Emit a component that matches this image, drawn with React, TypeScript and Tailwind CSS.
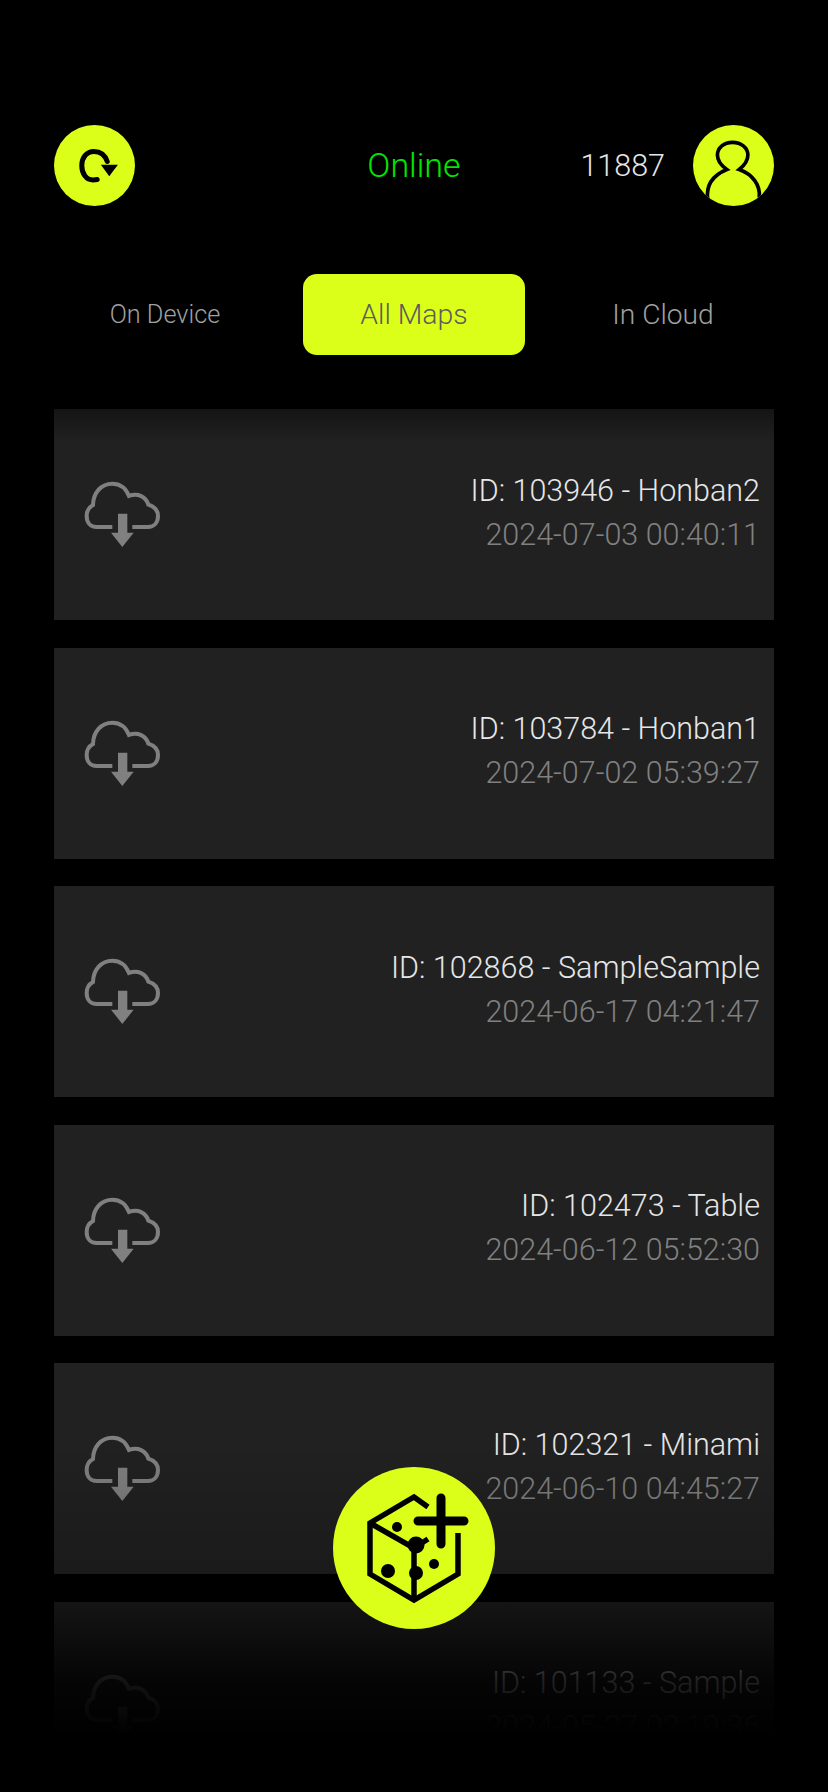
const maps = [
  { title: "ID: 103946 - Honban2", date: "2024-07-03 00:40:11" },
  { title: "ID: 103784 - Honban1", date: "2024-07-02 05:39:27" },
  { title: "ID: 102868 - SampleSample", date: "2024-06-17 04:21:47" },
  { title: "ID: 102473 - Table", date: "2024-06-12 05:52:30" },
  { title: "ID: 102321 - Minami", date: "2024-06-10 04:45:27" },
  { title: "ID: 101133 - Sample", date: "2024-05-27 02:19:36" },
];

const CloudDownload = () => (
  <svg viewBox="130 245 230 200" className="w-[76.67px] h-[66.67px] shrink-0">
    <path
      d="M215 383 H168 C148 383 138 368 138 350 C138 335 146 323 157 317 C158 280 182 253 215 253 C238 253 256 267 265 290 C292 280 316 292 323 316 C342 322 352 335 352 350 C352 370 340 383 322 383 H275"
      fill="none"
      stroke="#808080"
      strokeWidth="12"
    />
    <path d="M232 343 H260 V400 H279 L245 443 L211 400 H232 Z" fill="#808080" />
  </svg>
);

const RefreshIcon = () => (
  <svg viewBox="43 45 242 242" className="size-full">
    <path
      d="M172 208 C167 209 164 209 160 209 C139 209 126 190 126 166 C126 142 141 124 162 124 C182 124 196 136 202 154"
      fill="none"
      stroke="#000"
      strokeWidth="15"
      strokeLinecap="round"
    />
    <path d="M183 164 H234 L208 198 Z" fill="#000" />
  </svg>
);

const UserIcon = () => (
  <svg viewBox="40 45 242 242" className="size-full">
    <path
      d="M84 268 C78 225 100 195 141 178 C122 165 113 150 113 135 C113 112 133 97 158 97 C183 97 204 112 204 135 C204 150 195 165 178 178 C218 192 242 225 238 262"
      fill="none"
      stroke="#000"
      strokeWidth="11"
    />
  </svg>
);

const DiceIcon = () => (
  <svg viewBox="23 27 162 162" className="size-full">
    <g fill="none" stroke="#000" strokeWidth="5.5">
      <path d="M118 67 L104 57 L60 83 V134 L104 160 L148 134 V93" />
      <path d="M60 83 L104 108 V160" />
      <path d="M104 108 L118 99" />
    </g>
    <circle cx="87" cy="87" r="5" fill="#000" />
    <circle cx="106" cy="105" r="8.5" fill="#000" />
    <circle cx="78" cy="131" r="7" fill="#000" />
    <circle cx="106" cy="133" r="7" fill="#000" />
    <circle cx="124" cy="124" r="5" fill="#000" />
    <path d="M108 81 H154 M131 58 V104" stroke="#000" strokeWidth="9" strokeLinecap="round" />
  </svg>
);

const App = () => {
  return (
    <div
      className="relative w-[828px] h-[1792px] bg-black overflow-hidden pt-[125px]"
      style={{ fontFamily: "Roboto, sans-serif" }}
    >
      {/* Header */}
      <div className="relative flex items-center justify-between px-[54px] h-[81px]">
        <div className="w-[81px] h-[81px] rounded-full bg-[#dcff1a] overflow-hidden">
          <RefreshIcon />
        </div>
        <div className="absolute left-0 right-0 text-center text-[34px] font-light text-[#00e600]">Online</div>
        <div className="flex items-center gap-[28px]">
          <span className="text-[30.5px] font-light text-[#e6e6e6]">11887</span>
          <div className="w-[81px] h-[81px] rounded-full bg-[#dcff1a] overflow-hidden">
            <UserIcon />
          </div>
        </div>
      </div>

      {/* Tabs */}
      <div className="flex justify-between px-[54px] mt-[68px] font-light text-center leading-[81px]">
        <div className="w-[222px] h-[81px] text-[25.3px] text-[#a0a0a0]">On Device</div>
        <div className="w-[222px] h-[81px] rounded-[14px] bg-[#dcff1a] text-[28.4px] text-[#5c5c5c]">All Maps</div>
        <div className="w-[222px] h-[81px] text-[28.2px] text-[#a0a0a0]">In Cloud</div>
      </div>

      {/* Map list */}
      <div className="flex flex-col gap-[27.5px] px-[54px] mt-[54px]">
        {maps.map((m) => (
          <div key={m.title} className="h-[211px] shrink-0 bg-[#212121] flex items-center justify-between pl-[30px] pr-[14px]">
            <CloudDownload />
            <div className="text-right font-light text-[30.5px] leading-[44px] pb-[4px]">
              <div className="text-[#e6e6e6]">{m.title}</div>
              <div className="text-[#808080]">{m.date}</div>
            </div>
          </div>
        ))}
      </div>

      {/* Fades over the list */}
      <div className="absolute left-0 right-0 top-[409px] h-[34px] bg-gradient-to-b from-[#00000060] to-transparent" />
      <div className="absolute left-0 right-0 top-[1440px] h-[295px] bg-[linear-gradient(to_bottom,rgba(0,0,0,0)_0%,rgba(0,0,0,0.2)_45%,rgba(0,0,0,0.38)_55%,rgba(0,0,0,0.86)_82%,rgba(0,0,0,1)_100%)]" />
      <div className="absolute left-0 right-0 top-[1735px] bottom-0 bg-black" />

      {/* Create button */}
      <div className="absolute left-[333px] top-[1467px] w-[162px] h-[162px] rounded-full bg-[#dcff1a] overflow-hidden">
        <DiceIcon />
      </div>
    </div>
  );
};

export default App;
